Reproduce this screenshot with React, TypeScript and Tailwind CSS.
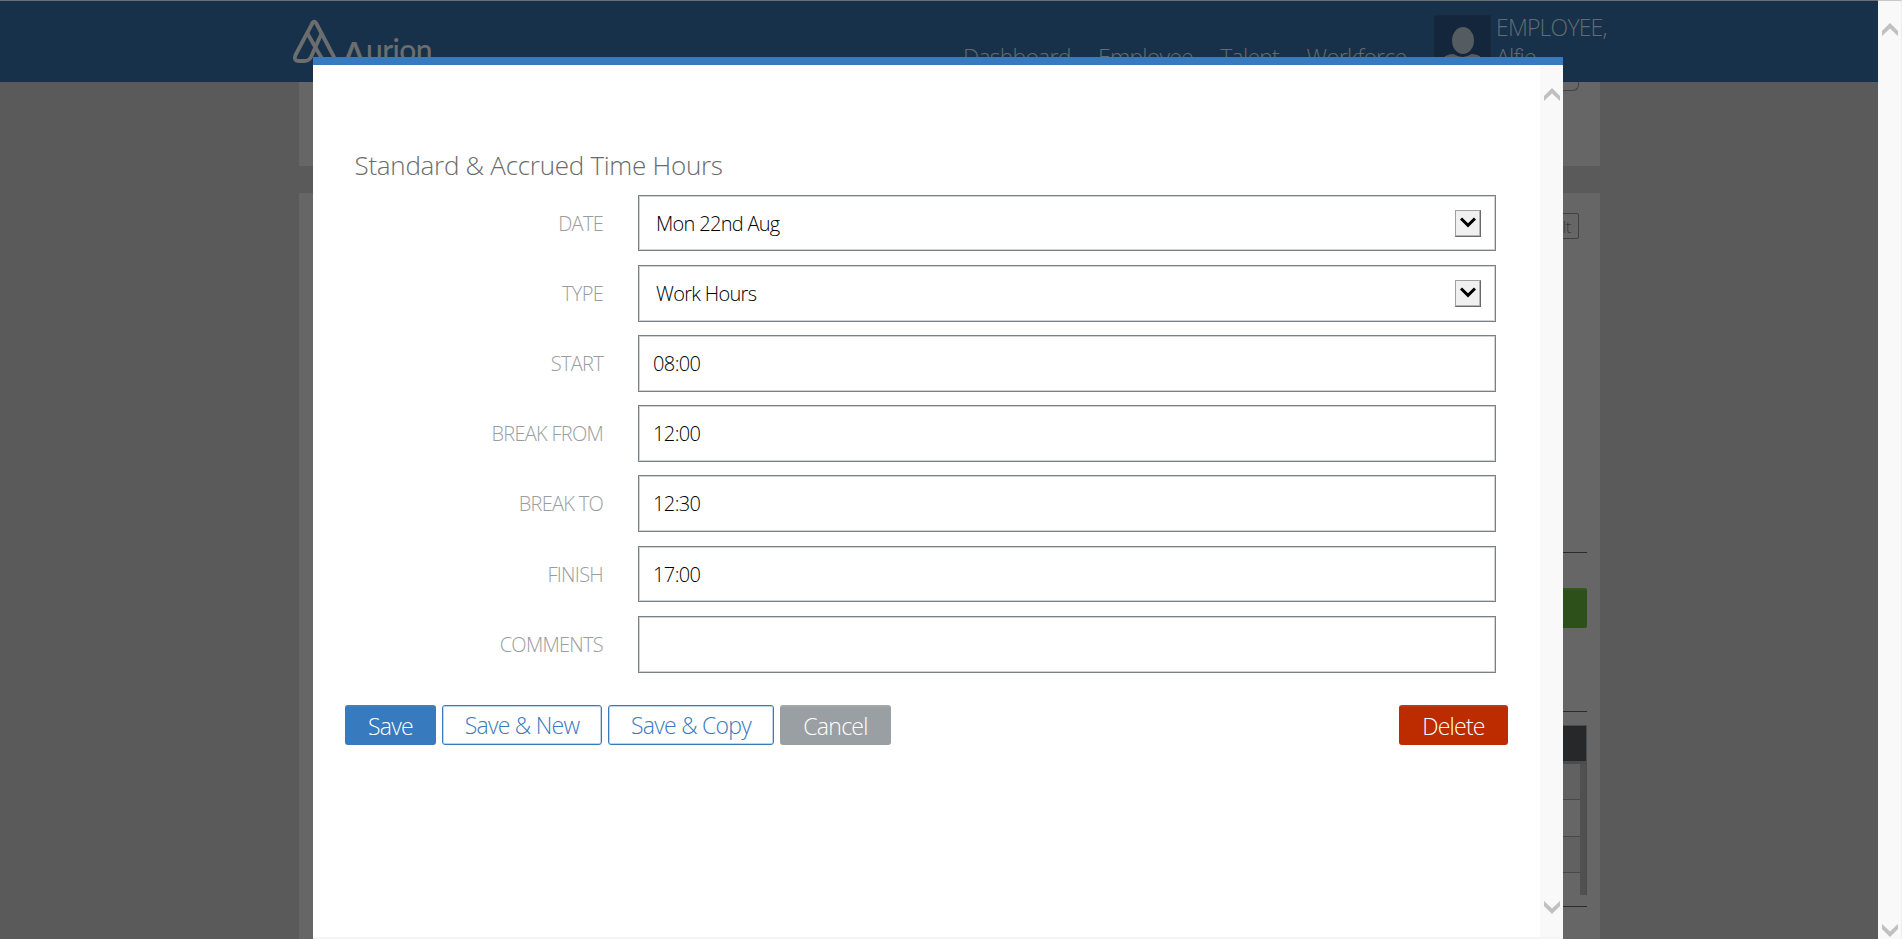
import React from "react";

type Row = { label: string; value: string; select?: boolean; box: string };

const rows: Row[] = [
  { label: "DATE", value: "Mon 22nd Aug", select: true, box: "h-[56px] mb-[14px]" },
  { label: "TYPE", value: "Work Hours", select: true, box: "h-[57px] mb-[13px]" },
  { label: "START", value: "08:00", box: "h-[57px] mb-[13px]" },
  { label: "BREAK FROM", value: "12:00", box: "h-[57px] mb-[13px]" },
  { label: "BREAK TO", value: "12:30", box: "h-[57px] mb-[14px]" },
  { label: "FINISH", value: "17:00", box: "h-[56px] mb-[14px]" },
  { label: "COMMENTS", value: "", box: "h-[57px]" },
];

function Chevron({ up, className }: { up?: boolean; className: string }) {
  return (
    <svg viewBox="0 0 16 13" className={className} fill="currentColor">
      {up ? (
        <path d="M0 8 L8 0 L16 8 V13 L8 5.5 L0 13 Z" />
      ) : (
        <path d="M0 0 L8 7.5 L16 0 V5 L8 13 L0 5 Z" />
      )}
    </svg>
  );
}

function Header() {
  return (
    <header className="flex h-[82px] border-t border-[#6b7073] bg-[#17314b] text-[23px] leading-[30px] font-light tracking-[-0.8px] text-[#646b70]">
      <div className="flex w-[670px] shrink-0 pt-[18px] pl-[292px]">
        <svg viewBox="0 0 46 46" className="h-[46px] w-[46px] shrink-0" fill="none" stroke="#6b6d6f" strokeWidth="3.8" strokeLinecap="round" strokeLinejoin="round">
          <path d="M20.500 4 Q22.300 1.200 24.100 4 L42 38 Q43 42 39 42 Q32 43 29 38 L15.500 14.500" />
          <path d="M20.500 4 L3.500 36 Q1.200 42 7 42 H12 Q17 42 19 38 L29.500 14.500" />
        </svg>
        <div className="flex h-[52px] pl-[4px] font-['Lato'] font-medium tracking-normal text-[#6b6d6f]">
          <span className="mt-[13px] text-[35px] leading-[42px] font-semibold">A</span>
          <span className="mt-[10px] text-[30px] leading-[40px] tracking-[-0.6px]">urion</span>
        </div>
      </div>
      <nav className="flex w-[764px] shrink-0 gap-[27.5px] pt-[41px] pl-[293px] whitespace-nowrap">
        <span>Dashboard</span>
        <span>Employee</span>
        <span>Talent</span>
        <span>Workforce</span>
      </nav>
      <div className="mt-[14px] h-[57px] w-[57px] shrink-0 border border-[#1d2833] bg-[#13263b]">
        <svg viewBox="0 0 54 55" className="h-full w-full" fill="#555c61">
          <ellipse cx="27.500" cy="24.500" rx="11" ry="13.500" />
          <path d="M6 55 V46 Q8 38 18 38 Q27 44 36 38 Q46 38 48 46 V55 Z" />
        </svg>
      </div>
      <div className="pt-[11px] pl-[5px]">
        <div>EMPLOYEE,</div>
        <div>Alfie</div>
      </div>
    </header>
  );
}

function Backdrop() {
  return (
    <div className="ml-[299px] flex w-[1301px] flex-1 flex-col">
      <section className="flex h-[84px] justify-end bg-[#666] pr-[21px]">
        <div className="h-[9px] w-[60px] rounded-br-[6px] border-r border-b border-[#444]" />
      </section>
      <section className="mt-[27px] flex flex-1 flex-col items-end bg-[#666] pr-[13px] pl-[14px]">
        <div className="mt-[20px] mr-[8px] h-[26px] w-[80px] rounded-[2px] border border-[#404040] pr-[7px] text-right text-[17px] leading-[25px] font-light tracking-[-0.5px] text-[#3a3a3a]">
          Default
        </div>
        <div className="mt-[313px] h-px w-full bg-[#2b2b2b]" />
        <div className="mt-[35px] h-[40px] w-[120px] rounded-[2px] border-t-2 border-[#31591f] bg-[#2d501b]" />
        <div className="mt-[83px] h-px w-full bg-[#2b2b2b]" />
        <div className="mt-[13px] flex h-[170px] w-full flex-col border-t border-r border-[#4b4c4e]">
          <div className="h-[35px] bg-[#26282a]" />
          <div className="h-[3px] bg-[#4b4c4e]" />
          <div className="flex flex-1">
            <div className="flex flex-1 flex-col">
              <div className="h-[36px] border-b border-[#484848] bg-[#616161]" />
              <div className="h-[37px] border-b border-[#484848]" />
              <div className="h-[36px] border-b border-[#484848] bg-[#616161]" />
            </div>
            <div className="w-[6px] bg-[#505050]" />
          </div>
        </div>
        <div className="mt-[11px] h-px w-full bg-[#2b2b2b]" />
      </section>
    </div>
  );
}

function Field({ row }: { row: Row }) {
  return (
    <div className={"flex " + row.box}>
      <div className="w-[290px] pt-[15.5px] text-right text-[20px] leading-[26px] tracking-[-0.72px] text-[#999da0]">{row.label}</div>
      <div className="ml-[35px] flex flex-1 border border-[#7b8084] bg-white p-px shadow-[inset_0_0_0_1px_#cfd3d6]">
        <div
          className={
            row.select
              ? "flex-1 pt-[14px] pl-[16px] text-[20px] leading-[26px] tracking-[-0.7px] text-black"
              : "flex-1 pt-[14px] pl-[13px] text-[20px] leading-[26px] tracking-[-0.6px] text-black"
          }
        >
          {row.value}
        </div>
        {row.select && (
          <div className="mt-[13px] mr-[13px] flex h-[27px] w-[26px] justify-center border border-t-[#a0a0a0] border-r-[#696969] border-b-[#696969] border-l-[#a0a0a0] bg-[#f0f0f0] pt-[6px] shadow-[inset_-1px_-1px_0_#b5b5b5]">
            <svg viewBox="0 0 16 11" className="mr-px h-[11px] w-[16px]" fill="none" stroke="#000" strokeWidth="3.000">
              <path d="M1 1.500 L8 8.300 L15 1.500" />
            </svg>
          </div>
        )}
      </div>
    </div>
  );
}

const button = "flex h-[40px] items-center justify-center rounded-[3px] pt-[1px] text-[23px] leading-none tracking-[-0.75px]";

function Modal() {
  return (
    <div className="absolute top-[57px] left-[313px] flex h-[882px] w-[1250px] border-t-[8px] border-[#377abd] bg-white font-light">
      <div className="flex w-[1227px] flex-col">
        <h1 className="mt-[82px] ml-[41.5px] text-[26px] leading-[36px] font-light tracking-[-0.28px] text-[#6b6b6b]">Standard &amp; Accrued Time Hours</h1>
        <div className="mt-[12px] w-[1183px]">
          {rows.map((r) => (
            <Field key={r.label} row={r} />
          ))}
        </div>
        <div className="mt-[32px] ml-[32px] flex w-[1163px] gap-[6px]">
          <div className={button + " w-[91px] border-t-2 border-[#4080bb] bg-[#377abd] text-white"}>Save</div>
          <div className={button + " w-[160px] border border-[#377abd] text-[#377abd] shadow-[inset_0_0_0_1px_#bfd5ea]"}>Save &amp; New</div>
          <div className={button + " w-[166px] border border-[#377abd] text-[#377abd] shadow-[inset_0_0_0_1px_#bfd5ea]"}>Save &amp; Copy</div>
          <div className={button + " w-[111px] border-t-2 border-[#a3a7aa] bg-[#9a9fa3] text-white"}>Cancel</div>
          <div className={button + " ml-auto w-[109px] border-t-2 border-[#b93b18] bg-[#bd2b00] text-white"}>Delete</div>
        </div>
      </div>
      <div className="flex flex-1 flex-col items-end justify-between bg-[#f9f9f9] pt-[23px] pr-[3px] pb-[25px] text-[#c0c0c0]">
        <Chevron up className="h-[13px] w-[16px]" />
        <Chevron className="h-[13px] w-[16px]" />
      </div>
      <div className="absolute bottom-0 left-0 h-[2px] w-full bg-[#f5f5f5]" />
    </div>
  );
}

export default function App() {
  return (
    <div className="relative flex h-[939px] w-[1902px] overflow-hidden bg-[#5a5a5a] font-['Open_Sans',sans-serif] font-light">
      <div className="flex w-[1878px] flex-col">
        <Header />
        <Backdrop />
      </div>
      <div className="flex flex-1 flex-col items-center justify-between border-t border-r border-t-[#c8c8c8] border-r-[#eee] bg-[#f9f9f9] pt-[22px] pb-[2px] text-[#c0c0c0]">
        <Chevron up className="h-[13px] w-[16px]" />
        <Chevron className="h-[13px] w-[16px]" />
      </div>
      <Modal />
    </div>
  );
}
